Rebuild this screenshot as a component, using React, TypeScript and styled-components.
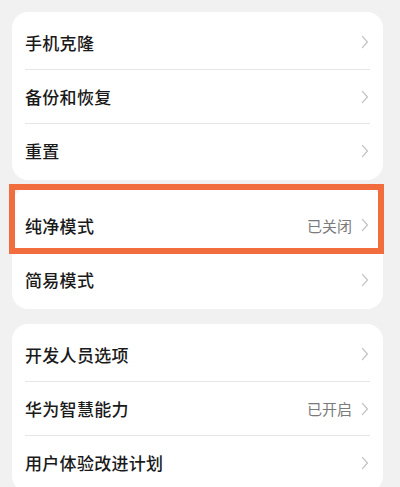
import styled, { createGlobalStyle } from "styled-components";

const GlobalStyle = createGlobalStyle`
  html, body {
    margin: 0;
    padding: 0;
    background: #f1f1f1;
  }
  body {
    font-family: "Noto Sans CJK SC", "Noto Sans", sans-serif;
  }
`;

const Page = styled.div`
  display: flex;
  flex-direction: column;
  gap: 15px;
  padding: 12px 17px 0 12px;
  height: 487px;
  box-sizing: border-box;
  overflow: hidden;
  background: #f1f1f1;
`;

// $lift: the card starts a little higher, the rows stay where they are
const Card = styled.div<{ $lift?: number }>`
  background: #ffffff;
  border-radius: 16px;
  padding: ${(p) => 3 + (p.$lift ?? 0)}px 0 3px;
  margin-top: ${(p) => -(p.$lift ?? 0)}px;
`;

const Row = styled.div`
  position: relative;
  display: flex;
  align-items: center;
  height: 54px;
  margin: 0 13px;
  box-sizing: border-box;
  & + & {
    border-top: 1px solid #e6e6e6;
  }
`;

const Label = styled.span`
  flex: 1;
  font-size: 17px;
  font-weight: 500;
  color: #1a1a1a;
  letter-spacing: 0.3px;
`;

const Value = styled.span`
  font-size: 15px;
  color: #7a7a7a;
  margin-right: 9px;
`;

const Chevron = styled.svg`
  width: 8px;
  height: 14px;
  margin-right: 1px;
  flex-shrink: 0;
`;

const Highlight = styled.div`
  position: absolute;
  z-index: 1;
  top: -14px;
  bottom: -2px;
  left: -16px;
  right: -14px;
  border: 6px solid #f26d3d;
  pointer-events: none;
`;

type Item = { label: string; value?: string; marked?: boolean };

const groups: { lift?: number; items: Item[] }[] = [
  { items: [{ label: "手机克隆" }, { label: "备份和恢复" }, { label: "重置" }] },
  {
    lift: 7,
    items: [{ label: "纯净模式", value: "已关闭", marked: true }, { label: "简易模式" }],
  },
  {
    items: [
      { label: "开发人员选项" },
      { label: "华为智慧能力", value: "已开启" },
      { label: "用户体验改进计划" },
    ],
  },
];

function Arrow() {
  return (
    <Chevron viewBox="0 0 8 14">
      <path
        d="M1.4 1.4 L6.4 7 L1.4 12.6"
        fill="none"
        stroke="#c4c4c4"
        strokeWidth="1.3"
        strokeLinecap="round"
        strokeLinejoin="round"
      />
    </Chevron>
  );
}

export default function App() {
  return (
    <>
      <GlobalStyle />
      <Page>
        {groups.map((group, i) => (
          <Card key={i} $lift={group.lift}>
            {group.items.map((item) => (
              <Row key={item.label}>
                <Label>{item.label}</Label>
                {item.value && <Value>{item.value}</Value>}
                <Arrow />
                {item.marked && <Highlight />}
              </Row>
            ))}
          </Card>
        ))}
      </Page>
    </>
  );
}
